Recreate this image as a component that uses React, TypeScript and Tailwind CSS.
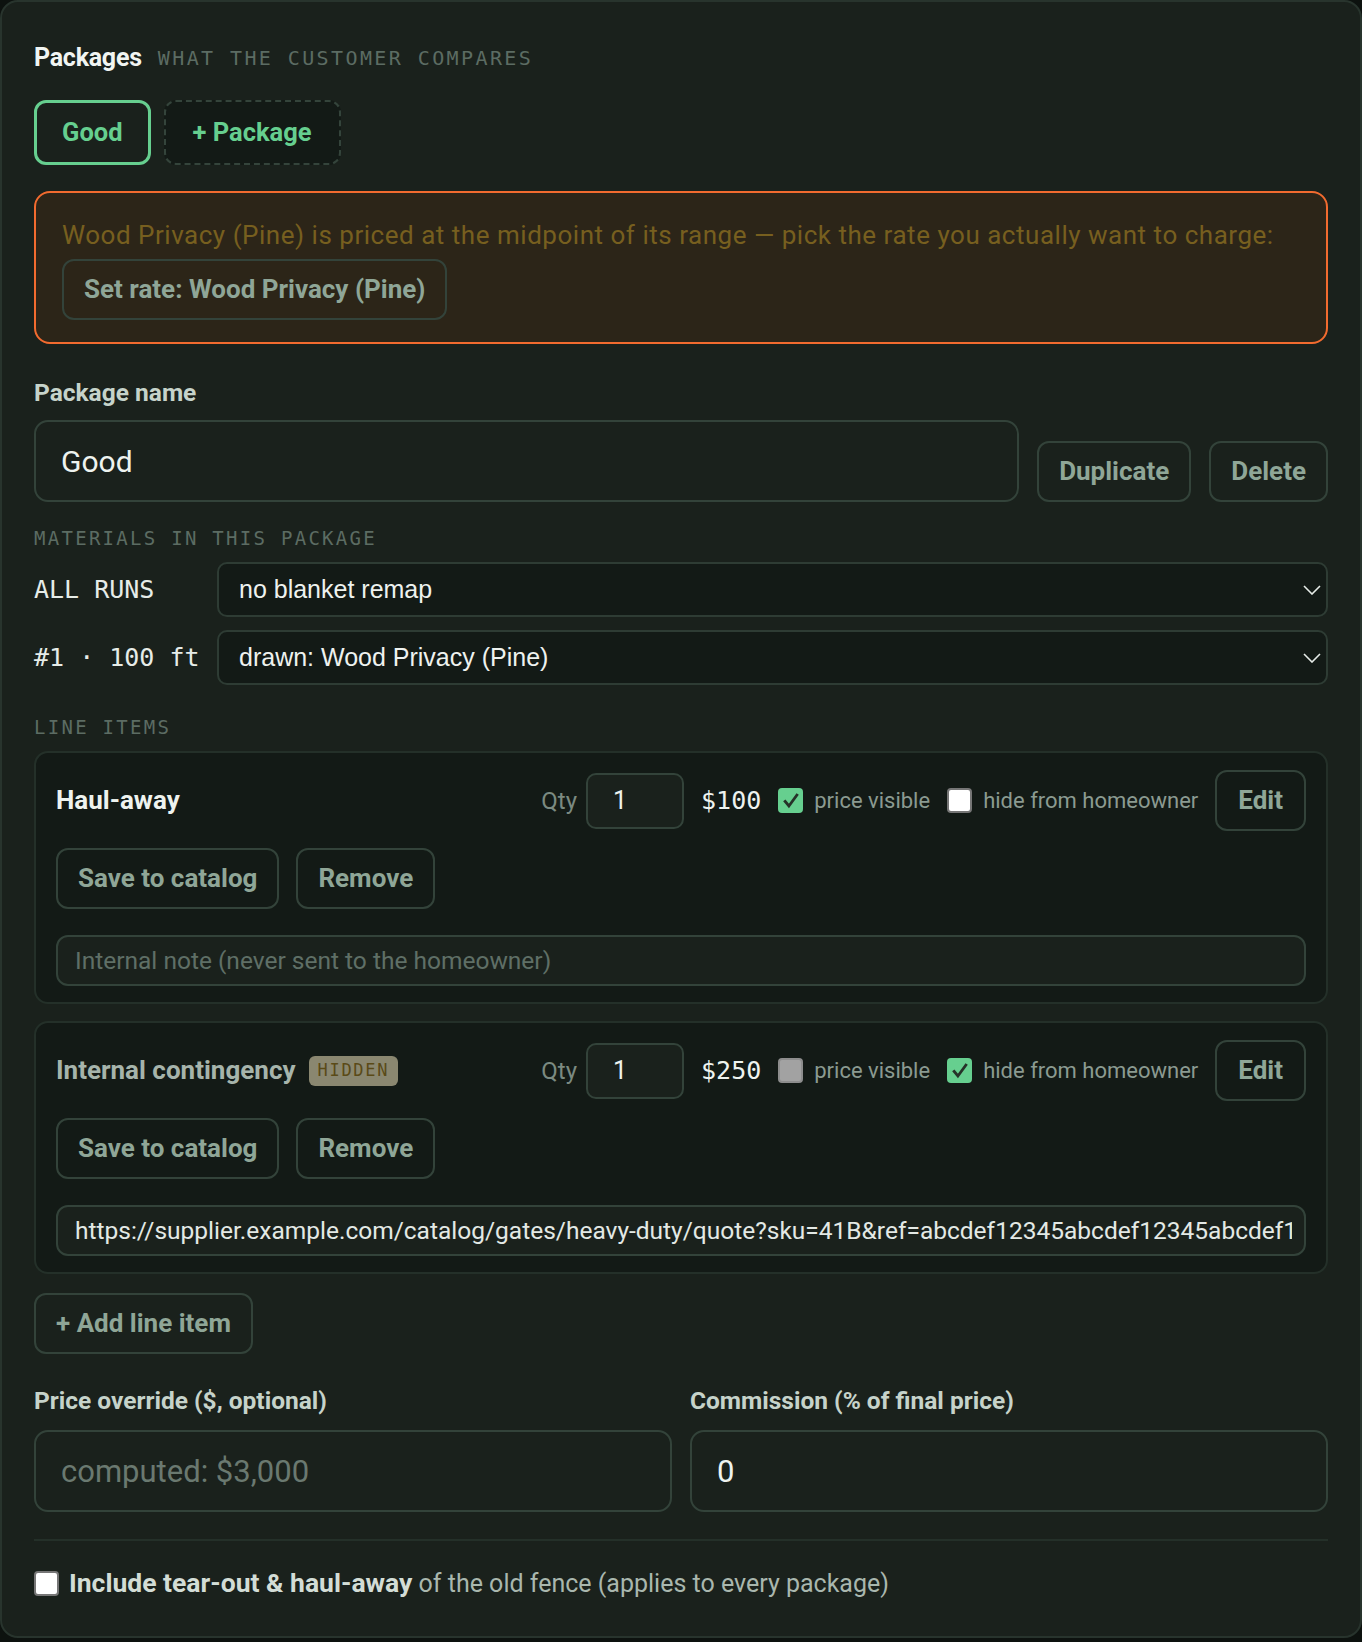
import React from "react";

const sans = "font-[family-name:Roboto,'Liberation_Sans',sans-serif]";
const mono = "font-[family-name:'DejaVu_Sans_Mono','Liberation_Mono',monospace]";
const arial = "font-[family-name:'Liberation_Sans',Arial,sans-serif]";

function Btn({ children, className = "" }: { children: React.ReactNode; className?: string }) {
  return (
    <button
      type="button"
      className={`flex h-[61px] shrink-0 items-center rounded-[12px] border-2 border-[#33433a] px-[20px] text-[26px] font-bold text-[#8fa697] ${className}`}
    >
      {children}
    </button>
  );
}

function Check({ state }: { state: "on" | "off" | "disabled" }) {
  if (state === "on") {
    return (
      <span className="flex h-[25px] w-[25px] shrink-0 items-center justify-center rounded-[4px] bg-[#66cf8f]">
        <svg viewBox="0 0 24 24" className="h-[20px] w-[20px]" fill="none">
          <path d="M5 12.5l4.5 5.5L19 5" stroke="#263229" strokeWidth="3.4" strokeLinecap="square" />
        </svg>
      </span>
    );
  }
  if (state === "disabled") {
    return <span className="h-[25px] w-[25px] shrink-0 rounded-[4px] border-2 border-[#8d8d8d] bg-[#a2a2a2]" />;
  }
  return <span className="h-[25px] w-[25px] shrink-0 rounded-[4px] border-2 border-[#767676] bg-white" />;
}

function Select({ value }: { value: string }) {
  return (
    <div className="relative flex-1">
      <select
        defaultValue={value}
        className={`h-[55px] w-full appearance-none rounded-[10px] border-2 border-[#2e3c34] bg-[#131a16] pl-[20px] text-[25px] text-[#eef2ef] ${arial}`}
      >
        <option>{value}</option>
      </select>
      <svg
        viewBox="0 0 18 10"
        className="pointer-events-none absolute right-[7px] top-[23px] h-[10px] w-[18px]"
        fill="none"
      >
        <path d="M1 1l8 8 8-8" stroke="#e6ece8" strokeWidth="1.6" />
      </svg>
    </div>
  );
}

type Item = {
  name: string;
  hidden: boolean;
  price: string;
  note: string;
  isNote: boolean;
};

const items: Item[] = [
  { name: "Haul-away", hidden: false, price: "$100", note: "Internal note (never sent to the homeowner)", isNote: false },
  {
    name: "Internal contingency",
    hidden: true,
    price: "$250",
    note: "https://supplier.example.com/catalog/gates/heavy-duty/quote?sku=41B&ref=abcdef12345abcdef12345abcdef12345",
    isNote: true,
  },
];

function LineItem({ item }: { item: Item }) {
  return (
    <div className="rounded-[14px] border-2 border-[#243029] bg-[#131a16] px-[20px] pb-[16px] pt-[17px]">
      <div className="flex h-[61px] items-center gap-[17px]">
        <div className="flex flex-1 items-center gap-[13px]">
          <span className={`text-[26px] font-bold ${item.hidden ? "text-[#a6b4ab]" : "text-[#eef3ef]"}`}>
            {item.name}
          </span>
          {item.hidden && (
            <span
              className={`flex h-[30px] items-center rounded-[6px] bg-[#8a8770] px-[9px] text-[17px] tracking-[0.1em] text-[#5a4a17] ${mono}`}
            >
              HIDDEN
            </span>
          )}
        </div>
        <div className="flex items-center gap-[9px]">
          <span className="text-[24px] text-[#7b8a81]">Qty</span>
          <input
            defaultValue="1"
            className="h-[56px] w-[98px] rounded-[10px] border-2 border-[#33433a] bg-[#1a211c] pl-[25px] text-[25px] text-[#eef3ef] outline-none"
          />
        </div>
        <span className={`text-[25px] text-[#eef3ef] ${mono}`}>{item.price}</span>
        <label className="flex items-center gap-[11px] text-[22px] text-[#8b9a91]">
          <Check state={item.hidden ? "disabled" : "on"} />
          price visible
        </label>
        <label className="flex items-center gap-[11px] text-[22px] text-[#8b9a91]">
          <Check state={item.hidden ? "on" : "off"} />
          hide from homeowner
        </label>
        <Btn className="h-[60px] px-[21px]">Edit</Btn>
      </div>
      <div className="mt-[17px] flex gap-[17px]">
        <Btn>Save to catalog</Btn>
        <Btn>Remove</Btn>
      </div>
      <input
        defaultValue={item.isNote ? item.note : ""}
        placeholder={item.isNote ? "" : item.note}
        className="mt-[26px] h-[51px] w-full rounded-[12px] border-2 border-[#33433a] bg-[#1a211c] pl-[17px] pr-[12px] text-[24.5px] text-[#e3e9e5] outline-none placeholder:text-[#5f6f66]"
      />
    </div>
  );
}

export default function App() {
  return (
    <div className={`min-h-screen bg-[#0d120f] ${sans}`}>
      <div className="rounded-[18px] border-2 border-[#28342d] bg-[#1a211c] px-[32px] pb-[39px] pt-[39px]">
        <div className="flex h-[34px] items-center gap-[16px]">
          <h1 className="text-[25px] font-bold tracking-[-0.01em] text-[#f1f5f2]">Packages</h1>
          <span className={`text-[20px] tracking-[0.12em] text-[#5c6c63] ${mono}`}>WHAT THE CUSTOMER COMPARES</span>
        </div>

        <div className="mt-[25px] flex gap-[13px]">
          <button
            type="button"
            className="h-[65px] rounded-[12px] border-[3px] border-[#66cf8f] px-[25px] text-[25.5px] font-bold text-[#66cf8f]"
          >
            Good
          </button>
          <button
            type="button"
            className="h-[65px] rounded-[12px] border-2 border-dashed border-[#34443b] bg-[#131a16] px-[27px] text-[25.5px] font-bold text-[#66cf8f]"
          >
            + Package
          </button>
        </div>

        <div className="mt-[26px] rounded-[16px] border-2 border-[#f26b2f] bg-[#2c2518] px-[26px] pb-[22px] pt-[22px]">
          <p className="text-[26px] leading-[40px] tracking-[0.02em] text-[#775f1f]">
            Wood Privacy (Pine) is priced at the midpoint of its range — pick the rate you actually want to charge:
          </p>
          <Btn className="mt-[4px]">Set rate: Wood Privacy (Pine)</Btn>
        </div>

        <div className="mt-[35px] text-[24.5px] font-bold leading-[28px] text-[#c6d3ca]">Package name</div>
        <div className="mt-[13px] flex items-end gap-[18px]">
          <input
            defaultValue="Good"
            className="h-[82px] flex-1 rounded-[14px] border-2 border-[#33433a] bg-[#1a211c] pl-[25px] text-[30px] text-[#eef3ef] outline-none"
          />
          <Btn>Duplicate</Btn>
          <Btn>Delete</Btn>
        </div>

        <div className={`mt-[24px] text-[19px] leading-[24px] tracking-[0.12em] text-[#5c6c63] ${mono}`}>
          MATERIALS IN THIS PACKAGE
        </div>
        <div className="mt-[12px] flex flex-col gap-[13px]">
          <div className="flex items-center">
            <span className={`w-[183px] shrink-0 text-[25px] text-[#e6ece8] ${mono}`}>ALL RUNS</span>
            <Select value="no blanket remap" />
          </div>
          <div className="flex items-center">
            <span className={`w-[183px] shrink-0 text-[25px] text-[#e6ece8] ${mono}`}>#1 · 100 ft</span>
            <Select value="drawn: Wood Privacy (Pine)" />
          </div>
        </div>

        <div className={`mt-[30px] text-[19px] leading-[24px] tracking-[0.12em] text-[#5c6c63] ${mono}`}>LINE ITEMS</div>
        <div className="mt-[12px] flex flex-col gap-[17px]">
          {items.map((item, index) => (
            <LineItem item={item} key={index} />
          ))}
        </div>

        <Btn className="mt-[19px]">+ Add line item</Btn>

        <div className="mt-[33px] grid grid-cols-2 gap-x-[18px]">
          <div>
            <div className="text-[24.5px] font-bold leading-[28px] text-[#c6d3ca]">Price override ($, optional)</div>
            <input
              placeholder="computed: $3,000"
              className="mt-[15px] h-[82px] w-full rounded-[14px] border-2 border-[#33433a] bg-[#1a211c] pl-[25px] text-[31px] text-[#eef3ef] outline-none placeholder:text-[#6a7970]"
            />
          </div>
          <div>
            <div className="text-[24.5px] font-bold leading-[28px] text-[#c6d3ca]">Commission (% of final price)</div>
            <input
              defaultValue="0"
              className="mt-[15px] h-[82px] w-full rounded-[14px] border-2 border-[#33433a] bg-[#1a211c] pl-[25px] text-[31px] text-[#eef3ef] outline-none"
            />
          </div>
        </div>

        <div className="mt-[27px] h-[2px] bg-[#243029]" />

        <label className="mt-[28px] flex h-[28px] items-center gap-[10px] text-[25px] text-[#a9b7ae]">
          <Check state="off" />
          <span>
            <b className="text-[26.5px] font-bold text-[#d3ddd6]">Include tear-out &amp; haul-away</b> of the old fence
            (applies to every package)
          </span>
        </label>
      </div>
    </div>
  );
}
